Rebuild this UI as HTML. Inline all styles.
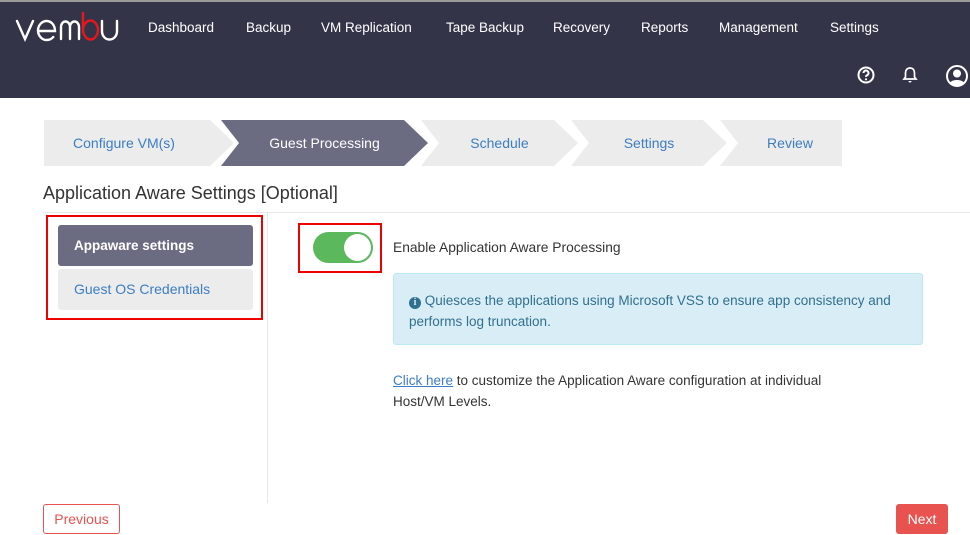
<!DOCTYPE html>
<html><head><meta charset="utf-8"><style>
*{box-sizing:border-box;margin:0;padding:0}
body{width:970px;height:535px;overflow:hidden;background:#fff;font-family:"Liberation Sans",sans-serif;position:relative}
.hdr{position:absolute;left:0;top:0;width:970px;height:98px;background:#343449;border-top:2px solid #9a9a9a}
.nav{position:absolute;top:18px;font-size:13.5px;color:#fff}
.ic{position:absolute;top:64px}
.step{position:absolute;top:120px;height:46px;line-height:46px;text-align:center;font-size:14px;color:#3c7dc4;background:#ececec}
.t{position:absolute;left:43px;top:183px;font-size:18px;color:#333}
.hr{position:absolute;left:43px;top:212px;width:927px;height:1px;background:#e8e8e8}
.vr{position:absolute;left:267px;top:213px;width:1px;height:290px;background:#e8e8e8}
.red{position:absolute;border:2px solid #e00}
.item{position:absolute;left:58px;width:195px;height:41px;line-height:41px;padding-left:16px;font-size:14px;border-radius:3px}
</style></head><body>
<div class="hdr">
<svg style="position:absolute;left:14px;top:8px" width="108" height="32" viewBox="0 0 108 32" fill="none" stroke-width="2.4" stroke-linecap="round">
<path d="M3 11l8 18 8-18" stroke="#fff"/>
<path d="M24 21h17c0-6-3.8-10-8.5-10S24 15.5 24 20.5s3.8 9.5 8.5 9.5c3 0 5.2-1.2 6.8-3" stroke="#fff"/>
<path d="M47 29V17c0-3 2-5.5 4.5-5.5S56 14 56 17v12M56 17c0-3 2-5.5 4.5-5.5S65 14 65 17v12" stroke="#fff"/>
<path d="M69 3v17c0 5 3.5 9.5 7.5 9.5S84 25 84 20s-3.5-9.5-7.5-9.5S69 15 69 20" stroke="#e8161d"/>
<path d="M88 11v10c0 5 3.2 8.5 7.5 8.5S103 26 103 21V11" stroke="#fff"/>
</svg>
<span class="nav" style="left:148px">Dashboard</span>
<span class="nav" style="left:246px">Backup</span>
<span class="nav" style="left:321px">VM Replication</span>
<span class="nav" style="left:446px">Tape Backup</span>
<span class="nav" style="left:553px">Recovery</span>
<span class="nav" style="left:641px">Reports</span>
<span class="nav" style="left:719px">Management</span>
<span class="nav" style="left:830px">Settings</span>
<svg class="ic" style="left:857px" width="18" height="18" viewBox="0 0 18 18"><circle cx="9" cy="9" r="7.5" fill="none" stroke="#fff" stroke-width="2"/><path d="M6.5 7a2.5 2.5 0 1 1 3.5 2.3c-.7.4-1 .8-1 1.6" fill="none" stroke="#fff" stroke-width="2"/><circle cx="9" cy="13.3" r="1.1" fill="#fff"/></svg>
<svg class="ic" style="left:902px" width="16" height="18" viewBox="0 0 16 18"><path d="M8 2c-3 0-4.5 2.2-4.5 5v4L2 13h12l-1.5-2V7c0-2.8-1.5-5-4.5-5z" fill="none" stroke="#fff" stroke-width="1.7"/><path d="M6.5 15a1.5 1.5 0 0 0 3 0" fill="#fff"/></svg>
<svg class="ic" style="left:946px;top:63px" width="22" height="22" viewBox="0 0 22 22"><circle cx="11" cy="11" r="10" fill="none" stroke="#fff" stroke-width="2"/><circle cx="11" cy="8.5" r="4" fill="#fff"/><path d="M4 18c1.5-4 12.5-4 14 0a9 9 0 0 1-14 0z" fill="#fff"/></svg>
</div>
<div class="step" style="left:44px;width:190px;clip-path:polygon(0 0,166px 0,190px 50%,166px 100%,0 100%);padding-right:30px">Configure VM(s)</div>
<div class="step" style="left:221px;width:207px;background:#6b6b82;color:#fff;clip-path:polygon(0 0,183px 0,207px 50%,183px 100%,0 100%,18px 50%)">Guest Processing</div>
<div class="step" style="left:421px;width:157px;clip-path:polygon(0 0,133px 0,157px 50%,133px 100%,0 100%,18px 50%)">Schedule</div>
<div class="step" style="left:571px;width:156px;clip-path:polygon(0 0,132px 0,156px 50%,132px 100%,0 100%,18px 50%)">Settings</div>
<div class="step" style="left:720px;width:122px;clip-path:polygon(0 0,122px 0,122px 100%,0 100%,18px 50%);padding-left:18px">Review</div>
<div class="t">Application Aware Settings [Optional]</div>
<div class="hr"></div><div class="vr"></div>
<div class="red" style="left:46px;top:215px;width:217px;height:105px"></div>
<div class="item" style="top:225px;background:#6b6b82;color:#fff;font-weight:bold;font-size:13.5px">Appaware settings</div>
<div class="item" style="top:269px;background:#ececec;color:#3c7dc4">Guest OS Credentials</div>
<div class="red" style="left:298px;top:223px;width:84px;height:50px"></div>
<div style="position:absolute;left:313px;top:232px;width:60px;height:31px;border-radius:16px;background:#5cb85c"></div>
<div style="position:absolute;left:344px;top:234px;width:27px;height:27px;border-radius:50%;background:#fff"></div>
<div style="position:absolute;left:393px;top:240px;font-size:13.8px;color:#333">Enable Application Aware Processing</div>
<div style="position:absolute;left:393px;top:273px;width:530px;height:72px;background:#d9edf7;border:1px solid #bce8f1;border-radius:3px;padding:16px 15px;font-size:13.5px;line-height:21px;color:#31708f"><span style="display:inline-block;width:12px;height:12px;border-radius:50%;background:#31708f;color:#d9edf7;font-size:10px;line-height:12px;text-align:center;font-weight:bold;font-family:'Liberation Serif',serif">i</span> Quiesces the applications using Microsoft VSS to ensure app consistency and performs log truncation.</div>
<div style="position:absolute;left:393px;top:370px;width:470px;font-size:13.5px;line-height:21px;color:#333"><span style="color:#3c7dc4;text-decoration:underline">Click here</span> to customize the Application Aware configuration at individual Host/VM Levels.</div>
<div style="position:absolute;left:43px;top:504px;width:77px;height:30px;border:1px solid #e8534f;border-radius:3px;color:#e8534f;font-size:14px;line-height:28px;text-align:center">Previous</div>
<div style="position:absolute;left:896px;top:504px;width:52px;height:30px;background:#e8534f;border-radius:3px;color:#fff;font-size:14px;line-height:30px;text-align:center">Next</div>
</body></html>
